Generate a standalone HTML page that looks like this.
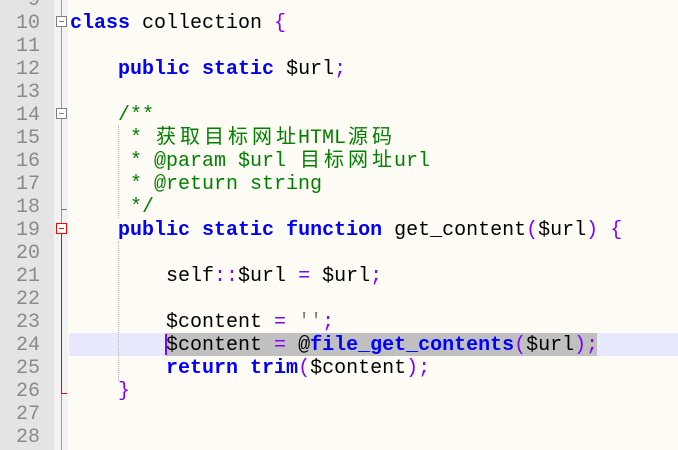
<!DOCTYPE html>
<html><head><meta charset="utf-8"><style>
body{margin:0;width:678px;height:450px;overflow:hidden;background:#fefcf5;position:relative;font-family:"Liberation Mono","Noto Sans CJK SC",monospace;font-size:20px}
#g{position:absolute;left:0;top:0;width:54px;height:450px;background:#e4e4e4}
#m{position:absolute;left:54px;top:0;width:14px;height:450px;background:#f2f2f2}
.row{position:absolute;left:0;height:23px;line-height:25px;white-space:pre}
.n{position:absolute;left:0;width:40px;text-align:right;color:#8a8a8a}
.t{position:absolute;left:70px;color:#000}
.k{color:#0000ff;font-weight:bold}
.p{color:#8000ff}
.c{color:#008000}
.s{color:#808080}
.z{display:inline-block;width:24px;text-align:center}
.box{position:absolute;left:56px;width:9px;height:9px;border:1px solid #808080;background:#fff}
.box:after{content:"";position:absolute;left:2px;top:4px;width:5px;height:1px;background:#808080}
</style></head><body>
<div id="g"></div><div id="m"></div>
<div style="position:absolute;left:61px;top:0;width:1px;height:450px;background:#9a9a9a"></div>
<div style="position:absolute;left:61px;top:232px;width:1px;height:162px;background:#ff0000"></div>
<div style="position:absolute;left:61px;top:393px;width:6px;height:1px;background:#ff0000"></div>
<div style="position:absolute;left:61px;top:209px;width:6px;height:1px;background:#808080"></div>
<div style="position:absolute;left:69px;top:333px;width:609px;height:23px;background:#e8e8ff"></div>
<div style="position:absolute;left:166px;top:333px;width:431px;height:23px;background:#c0c0c0"></div>
<div style="position:absolute;left:165px;top:334px;width:2px;height:21px;background:#8000ff"></div>
<div style="position:absolute;left:118px;top:126px;height:92px;border-left:1px dotted #b0b0b0"></div>
<div style="position:absolute;left:118px;top:241px;height:140px;border-left:1px dotted #b0b0b0"></div>
<div class="box" style="top:16px"></div>
<div class="box" style="top:108px"></div>
<div class="box" style="top:223px;border-color:#ff0000"></div>
<div style="position:absolute;left:59px;top:228px;width:5px;height:1px;background:#ff0000"></div>

<div class="row" style="top:-12px"><span class="n">9</span></div>
<div class="row" style="top:11px"><span class="n">10</span><span class="t"><span class="k">class</span> collection <span class="p">{</span></span></div>
<div class="row" style="top:34px"><span class="n">11</span></div>
<div class="row" style="top:57px"><span class="n">12</span><span class="t">    <span class="k">public</span> <span class="k">static</span> $url<span class="p">;</span></span></div>
<div class="row" style="top:80px"><span class="n">13</span></div>
<div class="row" style="top:103px"><span class="n">14</span><span class="t c">    /**</span></div>
<div class="row" style="top:126px"><span class="n">15</span><span class="t c">     * <span class="z">获</span><span class="z">取</span><span class="z">目</span><span class="z">标</span><span class="z">网</span><span class="z">址</span>HTML<span class="z">源</span><span class="z">码</span></span></div>
<div class="row" style="top:149px"><span class="n">16</span><span class="t c">     * @param $url <span class="z">目</span><span class="z">标</span><span class="z">网</span><span class="z">址</span>url</span></div>
<div class="row" style="top:172px"><span class="n">17</span><span class="t c">     * @return string</span></div>
<div class="row" style="top:195px"><span class="n">18</span><span class="t c">     */</span></div>
<div class="row" style="top:218px"><span class="n">19</span><span class="t">    <span class="k">public</span> <span class="k">static</span> <span class="k">function</span> get_content<span class="p">(</span>$url<span class="p">)</span> <span class="p">{</span></span></div>
<div class="row" style="top:241px"><span class="n">20</span></div>
<div class="row" style="top:264px"><span class="n">21</span><span class="t">        self<span class="p">::</span>$url <span class="p">=</span> $url<span class="p">;</span></span></div>
<div class="row" style="top:287px"><span class="n">22</span></div>
<div class="row" style="top:310px"><span class="n">23</span><span class="t">        $content <span class="p">=</span> <span class="s">''</span><span class="p">;</span></span></div>
<div class="row" style="top:333px"><span class="n">24</span><span class="t">        $content <span class="p">=</span> @<span class="k">file_get_contents</span><span class="p">(</span>$url<span class="p">);</span></span></div>
<div class="row" style="top:356px"><span class="n">25</span><span class="t">        <span class="k">return</span> <span class="k">trim</span><span class="p">(</span>$content<span class="p">);</span></span></div>
<div class="row" style="top:379px"><span class="n">26</span><span class="t">    <span class="p">}</span></span></div>
<div class="row" style="top:402px"><span class="n">27</span></div>
<div class="row" style="top:425px"><span class="n">28</span></div>
</body></html>
